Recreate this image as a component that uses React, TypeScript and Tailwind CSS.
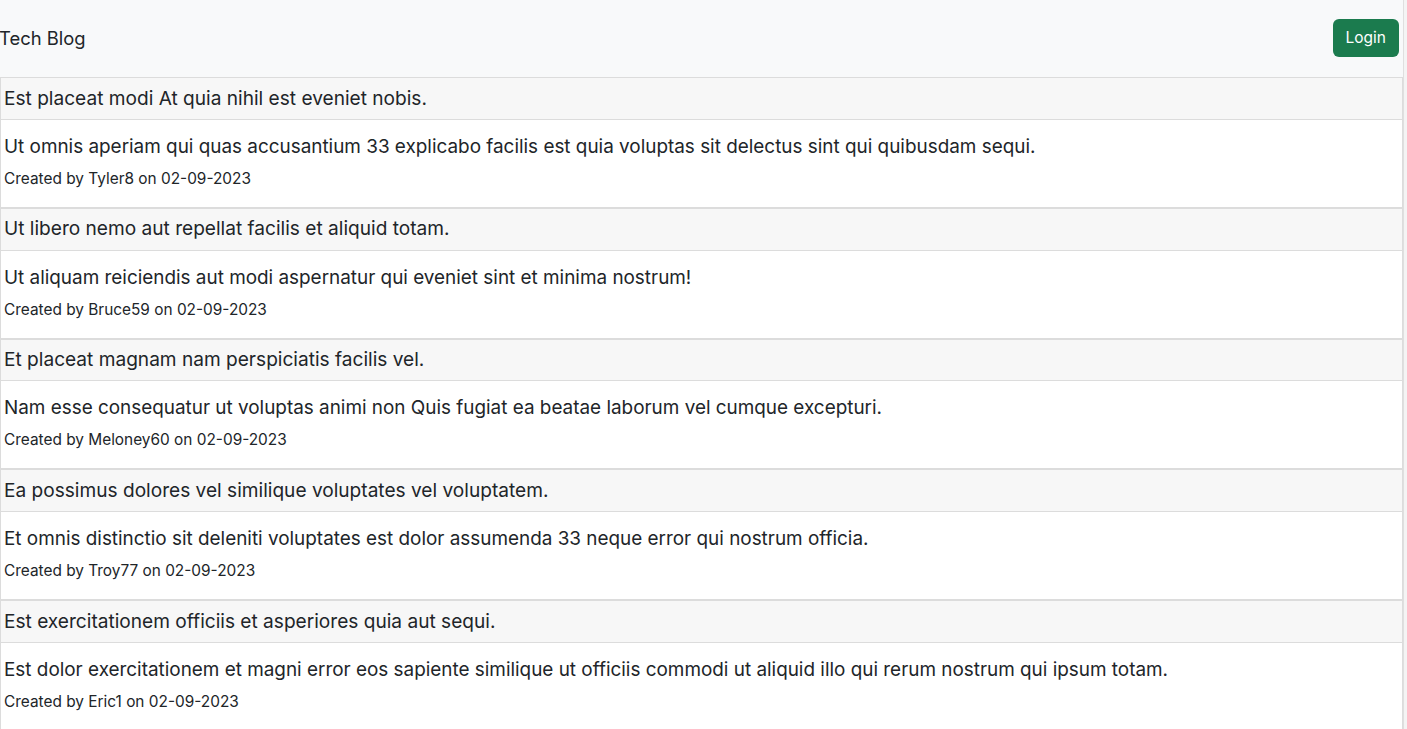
import React from 'react'

type Post = {
  id: number
  title: string
  content: string
  author: string
  date: string
}

const POSTS: Post[] = [
  {
    id: 1,
    title: 'Est placeat modi At quia nihil est eveniet nobis.',
    content: 'Ut omnis aperiam qui quas accusantium 33 explicabo facilis est quia voluptas sit delectus sint qui quibusdam sequi.',
    author: 'Tyler8',
    date: '02-09-2023',
  },
  {
    id: 2,
    title: 'Ut libero nemo aut repellat facilis et aliquid totam.',
    content: 'Ut aliquam reiciendis aut modi aspernatur qui eveniet sint et minima nostrum!',
    author: 'Bruce59',
    date: '02-09-2023',
  },
  {
    id: 3,
    title: 'Et placeat magnam nam perspiciatis facilis vel.',
    content: 'Nam esse consequatur ut voluptas animi non Quis fugiat ea beatae laborum vel cumque excepturi.',
    author: 'Meloney60',
    date: '02-09-2023',
  },
  {
    id: 4,
    title: 'Ea possimus dolores vel similique voluptates vel voluptatem.',
    content: 'Et omnis distinctio sit deleniti voluptates est dolor assumenda 33 neque error qui nostrum officia.',
    author: 'Troy77',
    date: '02-09-2023',
  },
  {
    id: 5,
    title: 'Est exercitationem officiis et asperiores quia aut sequi.',
    content: 'Est dolor exercitationem et magni error eos sapiente similique ut officiis commodi ut aliquid illo qui rerum nostrum qui ipsum totam.',
    author: 'Eric1',
    date: '02-09-2023',
  },
]

function PostCard({ post }: { post: Post }) {
  return (
    <div className="border border-[#dcdcdc] bg-white">
      <div className="bg-[#f7f7f7] border-b border-[#dcdcdc] pl-[3px] pr-1 py-[6.5px] text-[19.1px] leading-[27.75px]">
        {post.title}
      </div>
      <div className="pl-[3px] pr-1 pt-[15px] pb-4">
        <h5 className="text-[18.9px] leading-[24px] mb-2">{post.content}</h5>
        <p className="text-[15.4px] leading-[24px]">
          Created by {post.author} on {post.date}
        </p>
      </div>
    </div>
  )
}

export default function App() {
  return (
    <div
      className="min-h-screen bg-[#f4f4f4] text-[#212529]"
      style={{ fontFamily: 'Inter, "Liberation Sans", sans-serif' }}
    >
      <div className="w-[1404px] min-h-screen bg-white border-r border-[#dfdfdf]">
        <nav className="h-[77px] bg-[#f8f9fa] flex items-center justify-between pr-[4px] pb-[2px]">
          <span className="text-[18.4px] leading-[30px] -ml-px">Tech Blog</span>
          <button className="bg-[#1b7b4e] text-white text-[15.5px] leading-[24px] px-[13px] py-[7px] rounded-md">
            Login
          </button>
        </nav>
        <div>
          {POSTS.map((p) => (
            <PostCard key={p.id} post={p} />
          ))}
        </div>
      </div>
    </div>
  )
}
